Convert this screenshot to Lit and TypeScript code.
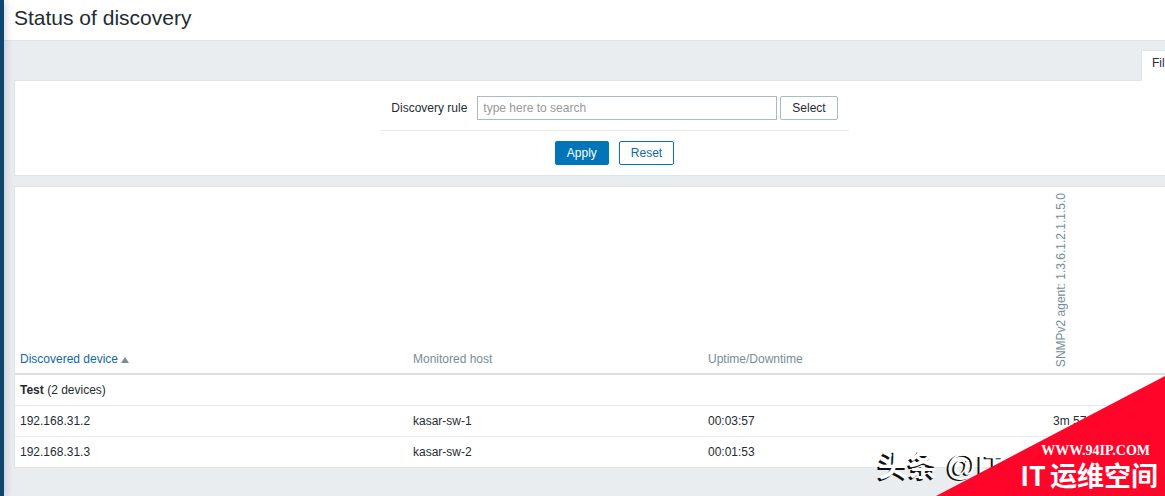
import { LitElement, html, css } from "lit";
import { customElement, property } from "lit/decorators.js";

interface Device {
  ip: string;
  host: string;
  uptime: string;
  check: string;
}

@customElement("discovery-filter")
class DiscoveryFilter extends LitElement {
  static styles = css`
    :host {
      display: block;
    }
    .tabs {
      display: flex;
      justify-content: flex-end;
    }
    .tab {
      box-sizing: border-box;
      width: 74px;
      height: 31px;
      margin-bottom: -1px;
      padding: 0 10px;
      border: 1px solid #dfe4e7;
      border-bottom: 0;
      background: #fff;
      color: #1f2c33;
      font: inherit;
      text-align: left;
      white-space: nowrap;
      line-height: 24px;
      display: flex;
      z-index: 1;
    }
    .panel {
      display: flex;
      justify-content: center;
      padding: 10px 0;
      background: #fff;
      border: 1px solid #dfe4e7;
    }
    .row {
      display: flex;
      align-items: center;
      padding: 5px 11px 10px;
      border-bottom: 1px solid #e8ebed;
    }
    label {
      margin-right: 10px;
    }
    input {
      box-sizing: border-box;
      width: 300px;
      height: 24px;
      margin: 0 3px 0 0;
      padding: 0 5px;
      border: 1px solid #acbbc2;
      border-radius: 0;
      font: inherit;
      color: #1f2c33;
      outline: 0;
    }
    input::placeholder {
      color: #999;
      opacity: 1;
    }
    .btn {
      box-sizing: border-box;
      height: 24px;
      padding: 0 11px;
      border: 1px solid #0275b8;
      border-radius: 2px;
      background: #fff;
      color: #0f69a8;
      font: inherit;
    }
    .grey {
      border-color: #acbbc2;
      color: #1f2c33;
    }
    .main {
      background: #0275b8;
      color: #fff;
    }
    .actions {
      display: flex;
      justify-content: center;
      gap: 10px;
      padding-top: 10px;
    }
  `;

  render() {
    return html`
      <div class="tabs"><button class="tab" type="button">Filter</button></div>
      <form class="panel" @submit=${(e: Event) => e.preventDefault()}>
        <div>
          <div class="row">
            <label for="rule">Discovery rule</label>
            <input id="rule" type="text" placeholder="type here to search" />
            <button class="btn grey" type="button">Select</button>
          </div>
          <div class="actions">
            <button class="btn main" type="submit">Apply</button>
            <button class="btn" type="reset">Reset</button>
          </div>
        </div>
      </form>
    `;
  }
}

@customElement("discovery-table")
class DiscoveryTable extends LitElement {
  @property({ attribute: false }) devices: Device[] = [];

  static styles = css`
    :host {
      display: block;
      background: #fff;
      border: 1px solid #dfe4e7;
      border-bottom: 0;
    }
    table {
      width: 100%;
      table-layout: fixed;
      border-collapse: separate;
      border-spacing: 0;
    }
    .device {
      width: 393px;
    }
    .host {
      width: 295px;
    }
    .uptime {
      width: 345px;
    }
    th,
    td {
      padding: 0 5px;
      text-align: left;
      white-space: nowrap;
    }
    th {
      padding: 6px 5px;
      vertical-align: bottom;
      border-bottom: 2px solid #dcdfe1;
      color: #768d99;
      font-weight: normal;
    }
    td {
      height: 30px;
      border-bottom: 1px solid #e8ebed;
    }
    tr:last-child td {
      border-bottom-color: #dfe4e7;
    }
    a {
      color: #0f69a8;
      text-decoration: none;
    }
    .arrow {
      display: inline-block;
      margin-left: 3px;
      border: 4px solid transparent;
      border-top: 0;
      border-bottom: 6px solid #768d99;
    }
    .vertical {
      display: block;
      writing-mode: vertical-rl;
      transform: rotate(180deg);
    }
  `;

  render() {
    return html`
      <table>
        <colgroup>
          <col class="device" />
          <col class="host" />
          <col class="uptime" />
          <col />
        </colgroup>
        <thead>
          <tr>
            <th scope="col">
              <a href="#">Discovered device<span class="arrow"></span></a>
            </th>
            <th scope="col">Monitored host</th>
            <th scope="col">Uptime/Downtime</th>
            <th scope="col">
              <span class="vertical">SNMPv2 agent: 1.3.6.1.2.1.1.5.0</span>
            </th>
          </tr>
        </thead>
        <tbody>
          <tr>
            <td colspan="4"><b>Test</b> (${this.devices.length} devices)</td>
          </tr>
          ${this.devices.map(
            (d) => html`<tr>
              <td>${d.ip}</td>
              <td>${d.host}</td>
              <td>${d.uptime}</td>
              <td>${d.check}</td>
            </tr>`
          )}
        </tbody>
      </table>
    `;
  }
}

@customElement("app-root")
class AppRoot extends LitElement {
  private devices: Device[] = [
    { ip: "192.168.31.2", host: "kasar-sw-1", uptime: "00:03:57", check: "3m 57s" },
    { ip: "192.168.31.3", host: "kasar-sw-2", uptime: "00:01:53", check: "" },
  ];

  static styles = css`
    :host {
      display: flex;
      position: relative;
      min-height: 100vh;
      overflow: hidden;
      background: #e9edf0;
      color: #1f2c33;
      font: 12px/16px "Liberation Sans", Arial, sans-serif;
    }
    .sidebar {
      flex: none;
      width: 4px;
      background: #0f466f;
      box-shadow: 0 0 8px rgba(0, 40, 60, 0.35);
      z-index: 1;
    }
    .page {
      flex: 1;
      min-width: 0;
    }
    header {
      padding: 6px 10px 10px;
      background: #fff;
      border-bottom: 1px solid #dfe4e7;
    }
    h1 {
      margin: 0;
      font-size: 21px;
      line-height: 24px;
      font-weight: normal;
    }
    /* The content area is wider than the window and runs past its right edge. */
    main {
      display: flex;
      flex-direction: column;
      gap: 10px;
      margin: 9px -50px 0 10px;
    }
    .watermark {
      position: absolute;
      right: 0;
      bottom: 12px;
      width: 287px;
      color: #fff;
      font: 30px/36px "Liberation Sans", "Noto Sans CJK SC", sans-serif;
      text-shadow: -2px 1px 0 #111;
      white-space: nowrap;
      z-index: 2;
    }
    .watermark b {
      text-shadow: -2px 2px 0 #111;
    }
    .corner {
      position: absolute;
      right: 0;
      bottom: 0;
      box-sizing: border-box;
      width: 229px;
      height: 120px;
      padding-top: 67px;
      background: #ff0529;
      clip-path: polygon(100% 0, 100% 100%, 0 100%);
      color: #fff;
      white-space: nowrap;
      z-index: 3;
    }
    .url {
      padding-right: 15px;
      text-align: right;
      font: bold 14px/16px "Liberation Serif", serif;
    }
    .brand {
      display: flex;
      justify-content: flex-end;
      gap: 4px;
      padding-right: 7px;
      font: bold 27px/32px "Noto Sans CJK SC", sans-serif;
    }
  `;

  render() {
    return html`
      <div class="sidebar"></div>
      <div class="page">
        <header><h1>Status of discovery</h1></header>
        <main>
          <discovery-filter></discovery-filter>
          <discovery-table .devices=${this.devices}></discovery-table>
        </main>
      </div>
      <div class="watermark"><b>头条</b> @IT</div>
      <div class="corner">
        <div class="url">WWW.94IP.COM</div>
        <div class="brand"><span>IT</span><span>运维空间</span></div>
      </div>
    `;
  }
}
